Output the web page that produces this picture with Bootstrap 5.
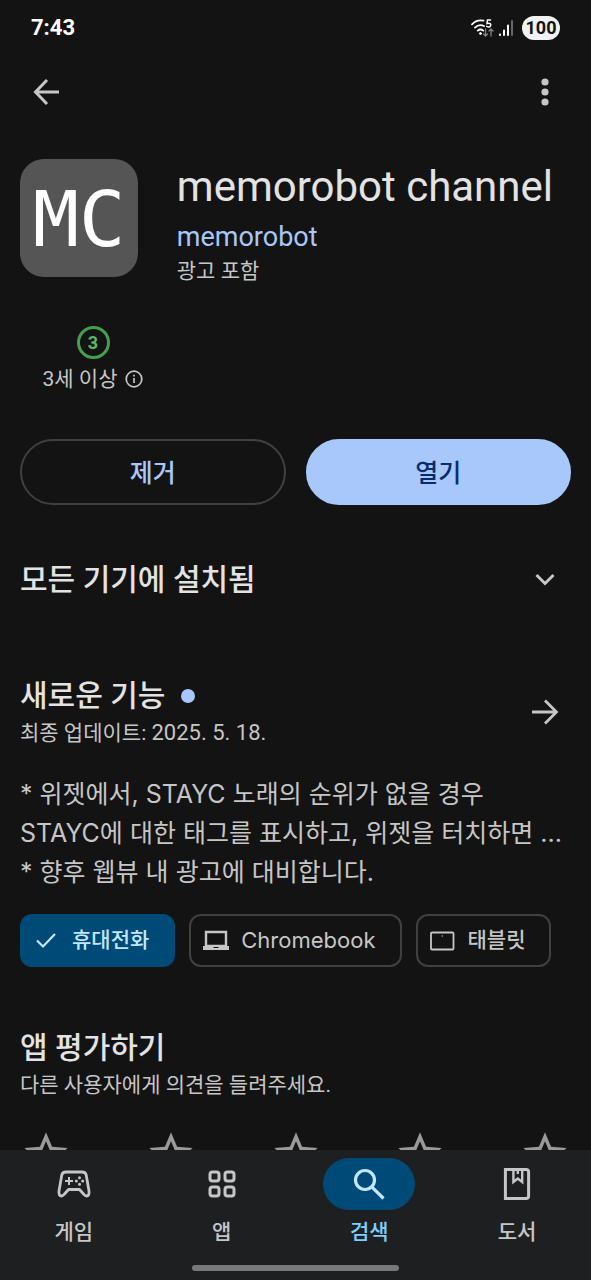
<!DOCTYPE html>
<html lang="ko" data-bs-theme="dark">
<head>
<meta charset="utf-8">
<meta name="viewport" content="width=device-width, initial-scale=1">
<title>memorobot channel</title>
<link href="https://cdn.jsdelivr.net/npm/bootstrap@5.3.0/dist/css/bootstrap.min.css" rel="stylesheet">
<script src="https://cdn.jsdelivr.net/npm/bootstrap@5.3.0/dist/js/bootstrap.bundle.min.js" defer></script>
<style>
  body { background: #131313; color: #c6c6c6; font-family: Roboto, "Noto Sans CJK KR", sans-serif; font-size: 21px; line-height: 32px; }
  svg { display: block; flex: none; }
  a { color: #a8c7fa; text-decoration: none; }
  .status-bar { height: 55px; padding: 0 31px; color: #fff; font-size: 22px; font-weight: 700; }
  .battery { background: #f1f1f1; color: #131313; border-radius: 12px; width: 38px; height: 24px; font-size: 18px; line-height: 24px; text-align: center; }
  .app-bar { height: 74px; padding: 0 20px; }
  .icon-btn { width: 52px; height: 52px; padding: 0; border: 0; color: #c6c6c6; display: flex; align-items: center; justify-content: center; }
  .page-scroll { min-height: 0; overflow-y: auto; scrollbar-width: none; }
  .page-scroll::-webkit-scrollbar { display: none; }
  .page-inner { padding: 30px 20px 40px; }
  .app-logo { width: 118px; height: 118px; border-radius: 24px; background: #555; color: #fff; font: 77px/122px "DejaVu Sans Mono", monospace; text-align: center; flex: none; }
  .head-text { padding-right: 18px; }
  .app-title { font-size: 42px; line-height: 56px; font-weight: 400; color: #e3e3e3; white-space: nowrap; }
  .developer { font-size: 27px; line-height: 36px; }
  .age-block { width: 146px; margin-top: 39px; }
  .age-ring { width: 33px; height: 33px; border: 3px solid #43a04d; border-radius: 50%; color: #5cb866; font-size: 18px; line-height: 27px; font-weight: 700; text-align: center; }
  .actions { margin-top: 44px; gap: 20px; }
  .btn-pill { height: 66px; padding: 8px 12px 5px; border-radius: 33px; font-size: 25px; font-weight: 500; border: 2px solid #404040; color: #a8c7fa; }
  .btn-pill.filled { background: #a8c7fa; border-color: #a8c7fa; color: #062e6f; }
  h2 { font-size: 30px; line-height: 42px; font-weight: 500; color: #e3e3e3; margin: 0; }
  .all-devices { margin-top: 49px; }
  .whats-new { margin-top: 69px; }
  .new-dot { width: 14px; height: 14px; border-radius: 50%; background: #a8c7fa; }
  .update-date { font-size: 22px; }
  .notes { font-family: Inter, "Noto Sans CJK KR", sans-serif; font-size: 25px; line-height: 39px; margin: 26px 0 0; white-space: nowrap; }
  .chips { margin-top: 22px; gap: 14px; }
  .chip { height: 53px; border: 2px solid #404040; border-radius: 12px; color: #c6c6c6; font-size: 21px; font-weight: 500; padding: 0 24px 0 12px; display: flex; align-items: center; gap: 12px; white-space: nowrap; }
  .chip.active-chip { background: #004a77; border-color: #004a77; color: #c2e7ff; }
  .chip-latin { font-family: Inter, sans-serif; font-size: 22px; font-weight: 400; }
  .rate { margin-top: 60px; }
  .stars { margin-top: 27px; }
  .star-btn { padding: 0; border: 0; color: #9a9a9a; }
  .tab-bar { background: #1e1f21; height: 130px; padding-top: 8px; }
  .tab-link { color: #c6c6c6; font-weight: 500; }
  .tab-icon { width: 92px; height: 52px; border-radius: 26px; margin-bottom: 6px; display: flex; align-items: center; justify-content: center; }
  .tab-link.current { color: #7fcfff; }
  .current .tab-icon { background: #004a77; color: #c2e7ff; }
  .home-handle { width: 35%; height: 6px; border-radius: 3px; background: #77787a; margin-bottom: 9px; }
</style>
</head>
<body>
<svg class="d-none"><symbol id="star" viewBox="0 0 24 24"><path d="M22 9.240l-7.190-.620L12 2 9.190 8.630 2 9.240l5.460 4.730L5.820 21 12 17.270 18.180 21l-1.630-7.030L22 9.240zM12 15.400l-3.760 2.270 1-4.280-3.320-2.880 4.380-.380L12 6.100l1.710 4.040 4.380.380-3.320 2.880 1 4.280L12 15.400z"/></symbol></svg>
<div class="vh-100 d-flex flex-column">
  <div class="status-bar d-flex align-items-center justify-content-between flex-shrink-0">
    <span>7:43</span>
    <div class="d-flex align-items-center gap-2">
      <div class="d-flex align-items-center gap-1">
        <svg width="23" height="20" viewBox="0 0 23 20" fill="none" stroke="#fff" stroke-width="1.800" stroke-linecap="round">
          <path d="M1 6.400C4 3 8 1.800 12.500 2.700M4 9.600C6.500 7 10 6.500 13 8M6.800 12.600C8.500 11.200 10.500 11.200 12.200 12.600"/>
          <circle cx="9.500" cy="15.500" r="1" fill="#fff" stroke-width="1"/>
          <path d="M19.500 2H16.500L16 5.500C19 4.500 20.500 6 19.500 7.800C18.800 9 17 9 15.700 8.300" stroke-width="1.500"/>
          <path d="M14.500 11V18M12.500 16L14.500 18L16.500 16M20 18V11M18 13L20 11L22 13" stroke="#858585" stroke-width="1.300"/>
        </svg>
        <svg width="16" height="18" viewBox="0 0 16 18" stroke-width="2" stroke-linecap="round">
          <path d="M2 15.500V16M6 11.500V16M10 6.500V16" stroke="#fff"/><path d="M14 2V16" stroke="#666"/>
        </svg>
      </div>
      <span class="battery">100</span>
    </div>
  </div>

  <header class="app-bar d-flex align-items-center justify-content-between flex-shrink-0">
    <button class="btn icon-btn" type="button" aria-label="뒤로">
      <svg width="28" height="28" viewBox="0 0 28 28" fill="none" stroke="currentColor" stroke-width="3"><path d="M27 14H3.500M15 2L3.500 14L15 26"/></svg>
    </button>
    <button class="btn icon-btn" type="button" aria-label="옵션 더보기">
      <svg width="8" height="28" viewBox="0 0 8 28" fill="currentColor"><circle cx="4" cy="4" r="3.600"/><circle cx="4" cy="14" r="3.600"/><circle cx="4" cy="24" r="3.600"/></svg>
    </button>
  </header>

  <main class="page-scroll flex-grow-1">
    <div class="page-inner">
      <section class="d-flex">
        <div class="app-logo">MC</div>
        <div class="head-text ms-auto">
          <h1 class="app-title mb-1">memorobot channel</h1>
          <a class="developer d-block" href="#">memorobot</a>
          <div>광고 포함</div>
        </div>
      </section>

      <section class="age-block d-flex flex-column align-items-center">
        <div class="age-ring">3</div>
        <div class="d-flex align-items-center gap-2 mt-1">
          <span>3세 이상</span>
          <svg width="18" height="18" viewBox="0 0 18 18" fill="none" stroke="currentColor" stroke-width="1.700"><circle cx="9" cy="9" r="7.800"/><path d="M9 8V13M9 4.700V6.500"/></svg>
        </div>
      </section>

      <div class="actions d-flex">
        <button class="btn btn-pill flex-fill w-50" type="button">제거</button>
        <button class="btn btn-pill filled flex-fill w-50" type="button">열기</button>
      </div>

      <section class="all-devices d-flex align-items-center justify-content-between">
        <h2>모든 기기에 설치됨</h2>
        <button class="btn icon-btn" type="button" aria-label="펼치기">
          <svg width="20" height="14" viewBox="0 0 20 14" fill="none" stroke="currentColor" stroke-width="3"><path d="M1.500 2L10 10.500L18.500 2"/></svg>
        </button>
      </section>

      <section class="whats-new">
        <div class="d-flex align-items-center justify-content-between">
          <div>
            <div class="d-flex align-items-center gap-3"><h2>새로운 기능</h2><span class="new-dot"></span></div>
            <div>최종 업데이트: <span class="update-date">2025. 5. 18.</span></div>
          </div>
          <button class="btn icon-btn" type="button" aria-label="자세히">
            <svg width="28" height="28" viewBox="0 0 28 28" fill="none" stroke="currentColor" stroke-width="2.800"><path d="M1 14H25M14 2.500L25.500 14L14 25.500"/></svg>
          </button>
        </div>
        <p class="notes">* 위젯에서, STAYC 노래의 순위가 없을 경우<br>STAYC에 대한 태그를 표시하고, 위젯을 터치하면 ...<br>* 향후 웹뷰 내 광고에 대비합니다.</p>
        <div class="chips d-flex">
          <button class="btn chip active-chip" type="button">
            <svg width="26" height="24" viewBox="0 0 26 24" fill="none" stroke="currentColor" stroke-width="2.200"><path d="M3 11.500L9 17.500L21 5"/></svg>휴대전화</button>
          <button class="btn chip chip-latin" type="button">
            <svg width="26" height="22" viewBox="0 0 26 22"><path d="M3 2H23V16H3Z" fill="none" stroke="currentColor" stroke-width="2.400"/><path d="M0 16H26V20H0Z" fill="currentColor"/><path d="M10.500 17.500H15.500" stroke="#131313"/></svg>Chromebook</button>
          <button class="btn chip" type="button">
            <svg width="26" height="20" viewBox="0 0 26 20" fill="none" stroke="currentColor" stroke-width="1.800"><rect x="1" y="1.500" width="22.500" height="17" rx="1"/><path d="M11.700 5H13" stroke-width="1.200"/></svg>태블릿</button>
        </div>
      </section>

      <section class="rate">
        <h2>앱 평가하기</h2>
        <div>다른 사용자에게 의견을 들려주세요.</div>
        <div class="stars d-flex justify-content-between">
          <button class="btn star-btn" type="button" aria-label="별점 1"><svg width="52" height="52" viewBox="0 0 24 24" fill="currentColor"><use href="#star"/></svg></button>
          <button class="btn star-btn" type="button" aria-label="별점 2"><svg width="52" height="52" viewBox="0 0 24 24" fill="currentColor"><use href="#star"/></svg></button>
          <button class="btn star-btn" type="button" aria-label="별점 3"><svg width="52" height="52" viewBox="0 0 24 24" fill="currentColor"><use href="#star"/></svg></button>
          <button class="btn star-btn" type="button" aria-label="별점 4"><svg width="52" height="52" viewBox="0 0 24 24" fill="currentColor"><use href="#star"/></svg></button>
          <button class="btn star-btn" type="button" aria-label="별점 5"><svg width="52" height="52" viewBox="0 0 24 24" fill="currentColor"><use href="#star"/></svg></button>
        </div>
      </section>
    </div>
  </main>

  <nav class="tab-bar flex-shrink-0 d-flex flex-column">
    <div class="row g-0 text-center">
      <a class="col tab-link" href="#">
        <span class="tab-icon mx-auto"><svg width="34" height="28" viewBox="0 0 34 28" fill="none" stroke="currentColor" stroke-width="2.800" stroke-linejoin="round"><path d="M9 2H25Q28.500 2 29.200 5L32 21Q32.500 26 29.500 26Q28.200 26 27 24.500L22.500 19.500H11.500L7 24.500Q5.800 26 4.500 26Q1.500 26 2 21L4.800 5Q5.500 2 9 2Z"/><path d="M8 11H16M12 7V15" stroke-width="2"/><g fill="currentColor" stroke="none"><circle cx="22.500" cy="7.800" r="1.500"/><circle cx="22.500" cy="14.200" r="1.500"/><circle cx="19.300" cy="11" r="1.500"/><circle cx="25.700" cy="11" r="1.500"/></g></svg></span>
        게임</a>
      <a class="col tab-link" href="#">
        <span class="tab-icon mx-auto"><svg width="28" height="28" viewBox="0 0 28 28" fill="none" stroke="currentColor" stroke-width="3"><rect x="2" y="2" width="9" height="9" rx="2.500"/><rect x="17" y="2" width="9" height="9" rx="2.500"/><rect x="2" y="17" width="9" height="9" rx="2.500"/><rect x="17" y="17" width="9" height="9" rx="2.500"/></svg></span>
        앱</a>
      <a class="col tab-link current" href="#" aria-current="page">
        <span class="tab-icon mx-auto"><svg width="32" height="32" viewBox="0 0 32 32" fill="none" stroke="currentColor" stroke-width="3.200"><circle cx="12" cy="12" r="9.500"/><path d="M18.800 18.800L30.500 30.500"/></svg></span>
        검색</a>
      <a class="col tab-link" href="#">
        <span class="tab-icon mx-auto"><svg width="28" height="34" viewBox="0 0 28 34" fill="none" stroke="currentColor" stroke-width="3"><path d="M2.400 2.400H23Q25.600 2.400 25.600 5V29Q25.600 31.600 23 31.600H2.400Z"/><path d="M10.400 3V15L14.800 11.500L19.200 15V3M14.800 3V7" stroke-width="2.400"/></svg></span>
        도서</a>
    </div>
    <div class="home-handle mx-auto mt-auto"></div>
  </nav>
</div>
</body>
</html>
